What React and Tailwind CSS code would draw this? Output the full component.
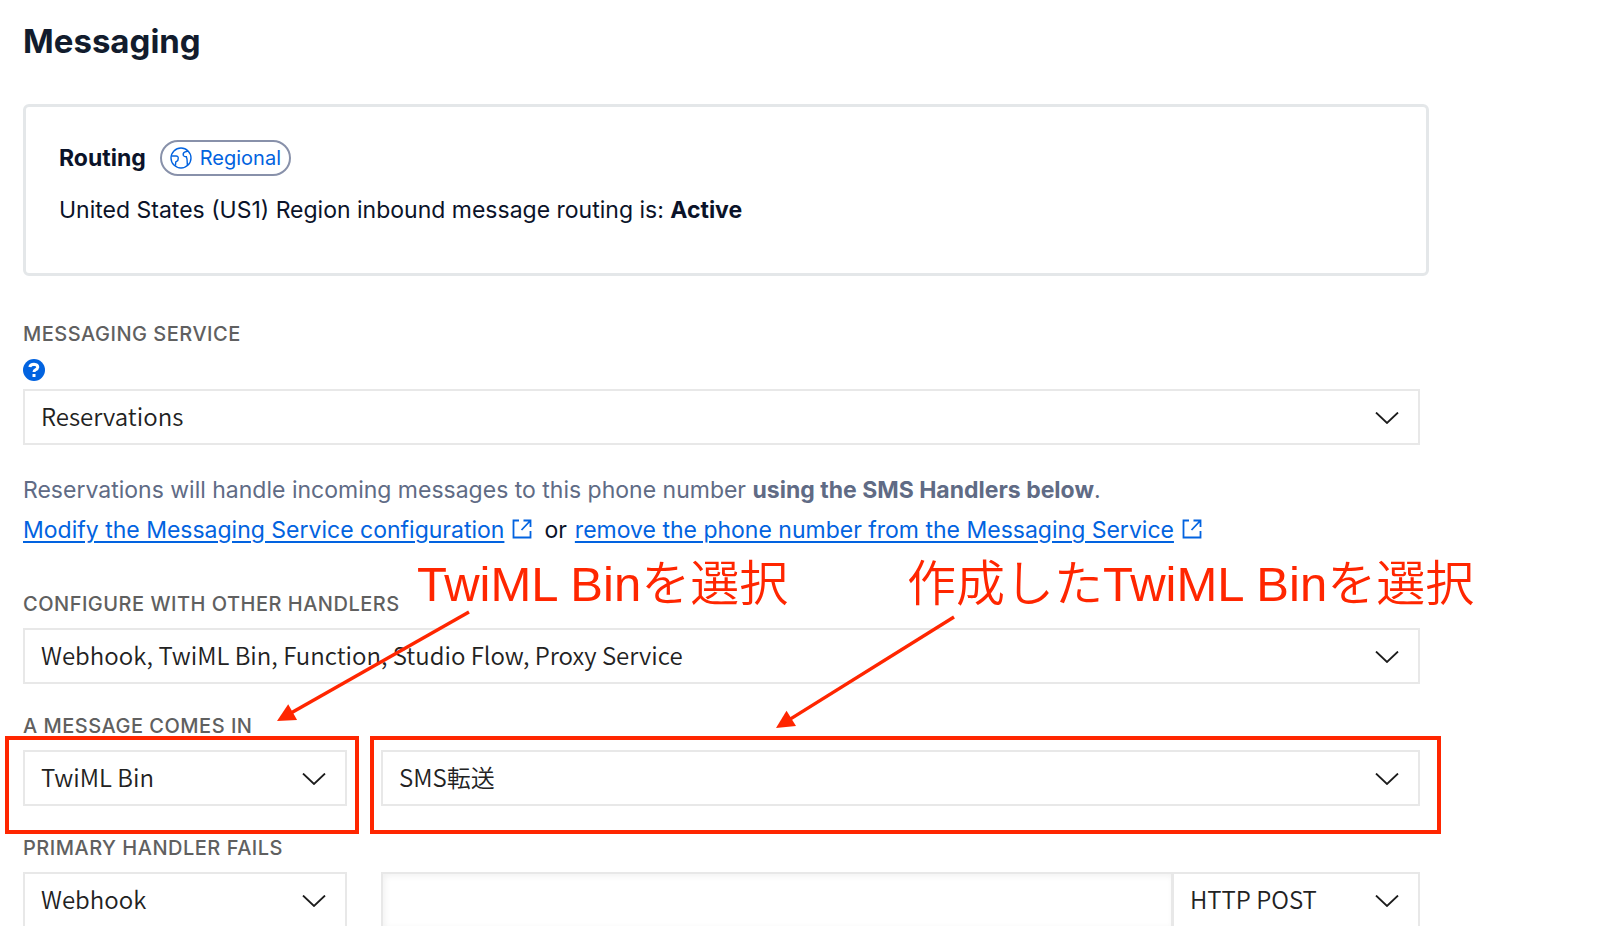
import React from "react";

const redText =
  "pointer-events-none absolute whitespace-nowrap text-[49px] leading-[56px] font-[350] text-[#ff2600] font-['Liberation_Sans','Noto_Sans_CJK_JP',sans-serif]";

function Chevron() {
  return (
    <svg
      className="pointer-events-none absolute top-[23px] right-[21px] h-3 w-6"
      viewBox="0 0 24 12"
      fill="none"
      stroke="#1c1c1c"
      strokeWidth="1.8"
      aria-hidden="true"
    >
      <path d="M1 0.5 L12 11 L23 0.5" />
    </svg>
  );
}

function Select({ id, label, value, className = "" }) {
  return (
    <div className={`relative ${className}`}>
      <select
        id={id}
        aria-label={label}
        defaultValue={value}
        className="block h-14 w-full appearance-none border-2 border-[#e8e8e8] bg-white pr-14 pb-[3px] pl-4 text-[24px] font-[350] text-[#222222] font-['Noto_Sans_CJK_JP',sans-serif]"
      >
        <option>{value}</option>
      </select>
      <Chevron />
    </div>
  );
}

function Label({ htmlFor, children }) {
  return (
    <label htmlFor={htmlFor} className="block text-[20px] leading-6 font-medium tracking-wide text-[#606060] uppercase">
      {children}
    </label>
  );
}

function GlobeIcon() {
  return (
    <svg className="h-[22px] w-[22px]" viewBox="0 0 22 22" fill="none" stroke="currentColor" strokeWidth="1.4" aria-hidden="true">
      <circle cx="11" cy="11" r="10" />
      <path d="M1.5 9 H6 Q8.5 9 8.2 11.5 L7.8 13.5 L5.8 14.8 L5.4 18.6" />
      <path d="M18 4 L14.6 5.2 Q12.6 6.4 13.4 8.6 Q14.6 10 16.4 9.8 L17 12 L17.4 18.4" />
    </svg>
  );
}

function ExternalIcon() {
  return (
    <svg className="ml-2 inline-block h-5 w-5 align-[-1px]" viewBox="0 0 20 20" fill="none" stroke="currentColor" strokeWidth="1.8" aria-hidden="true">
      <path d="M7 1.5 H1.5 V18.5 H18.5 V12" />
      <path d="M11.5 1.5 H18.5 V8 M18.5 1.5 L9.5 11" />
    </svg>
  );
}

function Arrow({ width, height, className }) {
  const angle = Math.atan2(height, width);
  const head = (along, side) => {
    const x = along * Math.cos(angle) - side * Math.sin(angle);
    const y = height - along * Math.sin(angle) - side * Math.cos(angle);
    return `${x},${y}`;
  };
  return (
    <svg
      className={`pointer-events-none absolute overflow-visible ${className}`}
      width={width}
      height={height}
      aria-hidden="true"
    >
      <line x1={12 * Math.cos(angle)} y1={height - 12 * Math.sin(angle)} x2={width} y2="0" stroke="#ff2600" strokeWidth="3.4" />
      <polygon points={`0,${height} ${head(18, 9)} ${head(18, -9)}`} fill="#ff2600" />
    </svg>
  );
}

export default function App() {
  return (
    <main className="min-h-screen bg-white pt-[19px] pr-[171px] pl-[23px] text-[23px] text-[#0b1329] font-['Inter','Noto_Sans_CJK_JP',sans-serif]">
      <h1 className="text-[33px] leading-[44px] font-bold text-[#121c2d]">Messaging</h1>

      <section className="mt-[41px] rounded-md border-[3px] border-[#e4e7e9] px-[33px] pt-[33px] pb-[45px]">
        <div className="flex items-center gap-[14px]">
          <h2 className="leading-9 font-bold">Routing</h2>
          <span className="flex h-9 items-center gap-2 rounded-full border-2 border-[#8891aa] px-2 text-[20px] text-[#0263e0]">
            <GlobeIcon />
            Regional
          </span>
        </div>
        <p className="mt-4 leading-9">
          United States (US1) Region inbound message routing is: <strong className="font-bold">Active</strong>
        </p>
      </section>

      <form className="pt-[46px] pr-[9px]">
        <Label htmlFor="service">Messaging Service</Label>
        <button type="button" aria-label="Help" className="mt-[13px] mb-2 block h-[22px] w-[22px] rounded-full bg-[#0263e0] text-white">
          <svg viewBox="0 0 22 22" fill="none" stroke="currentColor" strokeWidth="3" aria-hidden="true">
            <path d="M6.8 8 Q7.4 5.2 11 5.2 Q14.8 5.4 14.8 8.2 Q14.6 10 12.4 10.8 Q11 11.4 11 13" />
            <path d="M11 15 V18" />
          </svg>
        </button>
        <Select id="service" value="Reservations" />

        <p className="mt-[25px] leading-10 text-[#606b85]">
          Reservations will handle incoming messages to this phone number{" "}
          <strong className="font-bold">using the SMS Handlers below</strong>.
        </p>
        <p className="leading-10">
          <a href="#modify" className="text-[#0263e0]">
            <span className="underline decoration-2 underline-offset-[3px]">Modify the Messaging Service configuration</span>
            <ExternalIcon />
          </a>
          <span className="mr-2 ml-3">or</span>
          <a href="#remove" className="text-[#0263e0]">
            <span className="underline decoration-2 underline-offset-[3px]">remove the phone number from the Messaging Service</span>
            <ExternalIcon />
          </a>
        </p>

        <div className="relative mt-[42px]">
          <Label htmlFor="handlers">Configure with other handlers</Label>
          <Select id="handlers" value="Webhook, TwiML Bin, Function, Studio Flow, Proxy Service" className="mt-3" />
          <p className={`${redText} -top-[36px] left-[394px]`}>TwiML Binを選択</p>
          <p className={`${redText} -top-[36px] left-[884px]`}>作成したTwiML Binを選択</p>
          <Arrow width={192} height={109} className="top-5 left-[254px]" />
          <Arrow width={178} height={111} className="top-[25px] left-[753px]" />
        </div>

        <div className="mt-[30px]">
          <Label htmlFor="incoming">A message comes in</Label>
          <div className="mt-3 flex gap-[34px]">
            <div className="relative w-[324px]">
              <Select id="incoming" value="TwiML Bin" />
              <div className="pointer-events-none absolute -top-[14px] -right-3 -bottom-7 -left-[18px] border-4 border-[#ff2600]" />
            </div>
            <div className="relative flex-1">
              <Select id="bin" label="TwiML Bin name" value="SMS転送" />
              <div className="pointer-events-none absolute -top-[14px] -right-[21px] -bottom-7 -left-[11px] border-4 border-[#ff2600]" />
            </div>
          </div>
        </div>

        <div className="mt-[30px]">
          <Label htmlFor="fails">Primary handler fails</Label>
          <div className="mt-3 flex">
            <Select id="fails" value="Webhook" className="mr-[34px] w-[324px]" />
            <input
              type="url"
              aria-label="Primary handler URL"
              className="h-14 min-w-0 flex-1 border-2 border-[#e8e8e8] bg-white px-4 shadow-[inset_2px_2px_6px_#0000000f]"
            />
            <Select id="method" label="HTTP method" value="HTTP POST" className="-ml-px w-[248px]" />
          </div>
        </div>
      </form>
    </main>
  );
}
